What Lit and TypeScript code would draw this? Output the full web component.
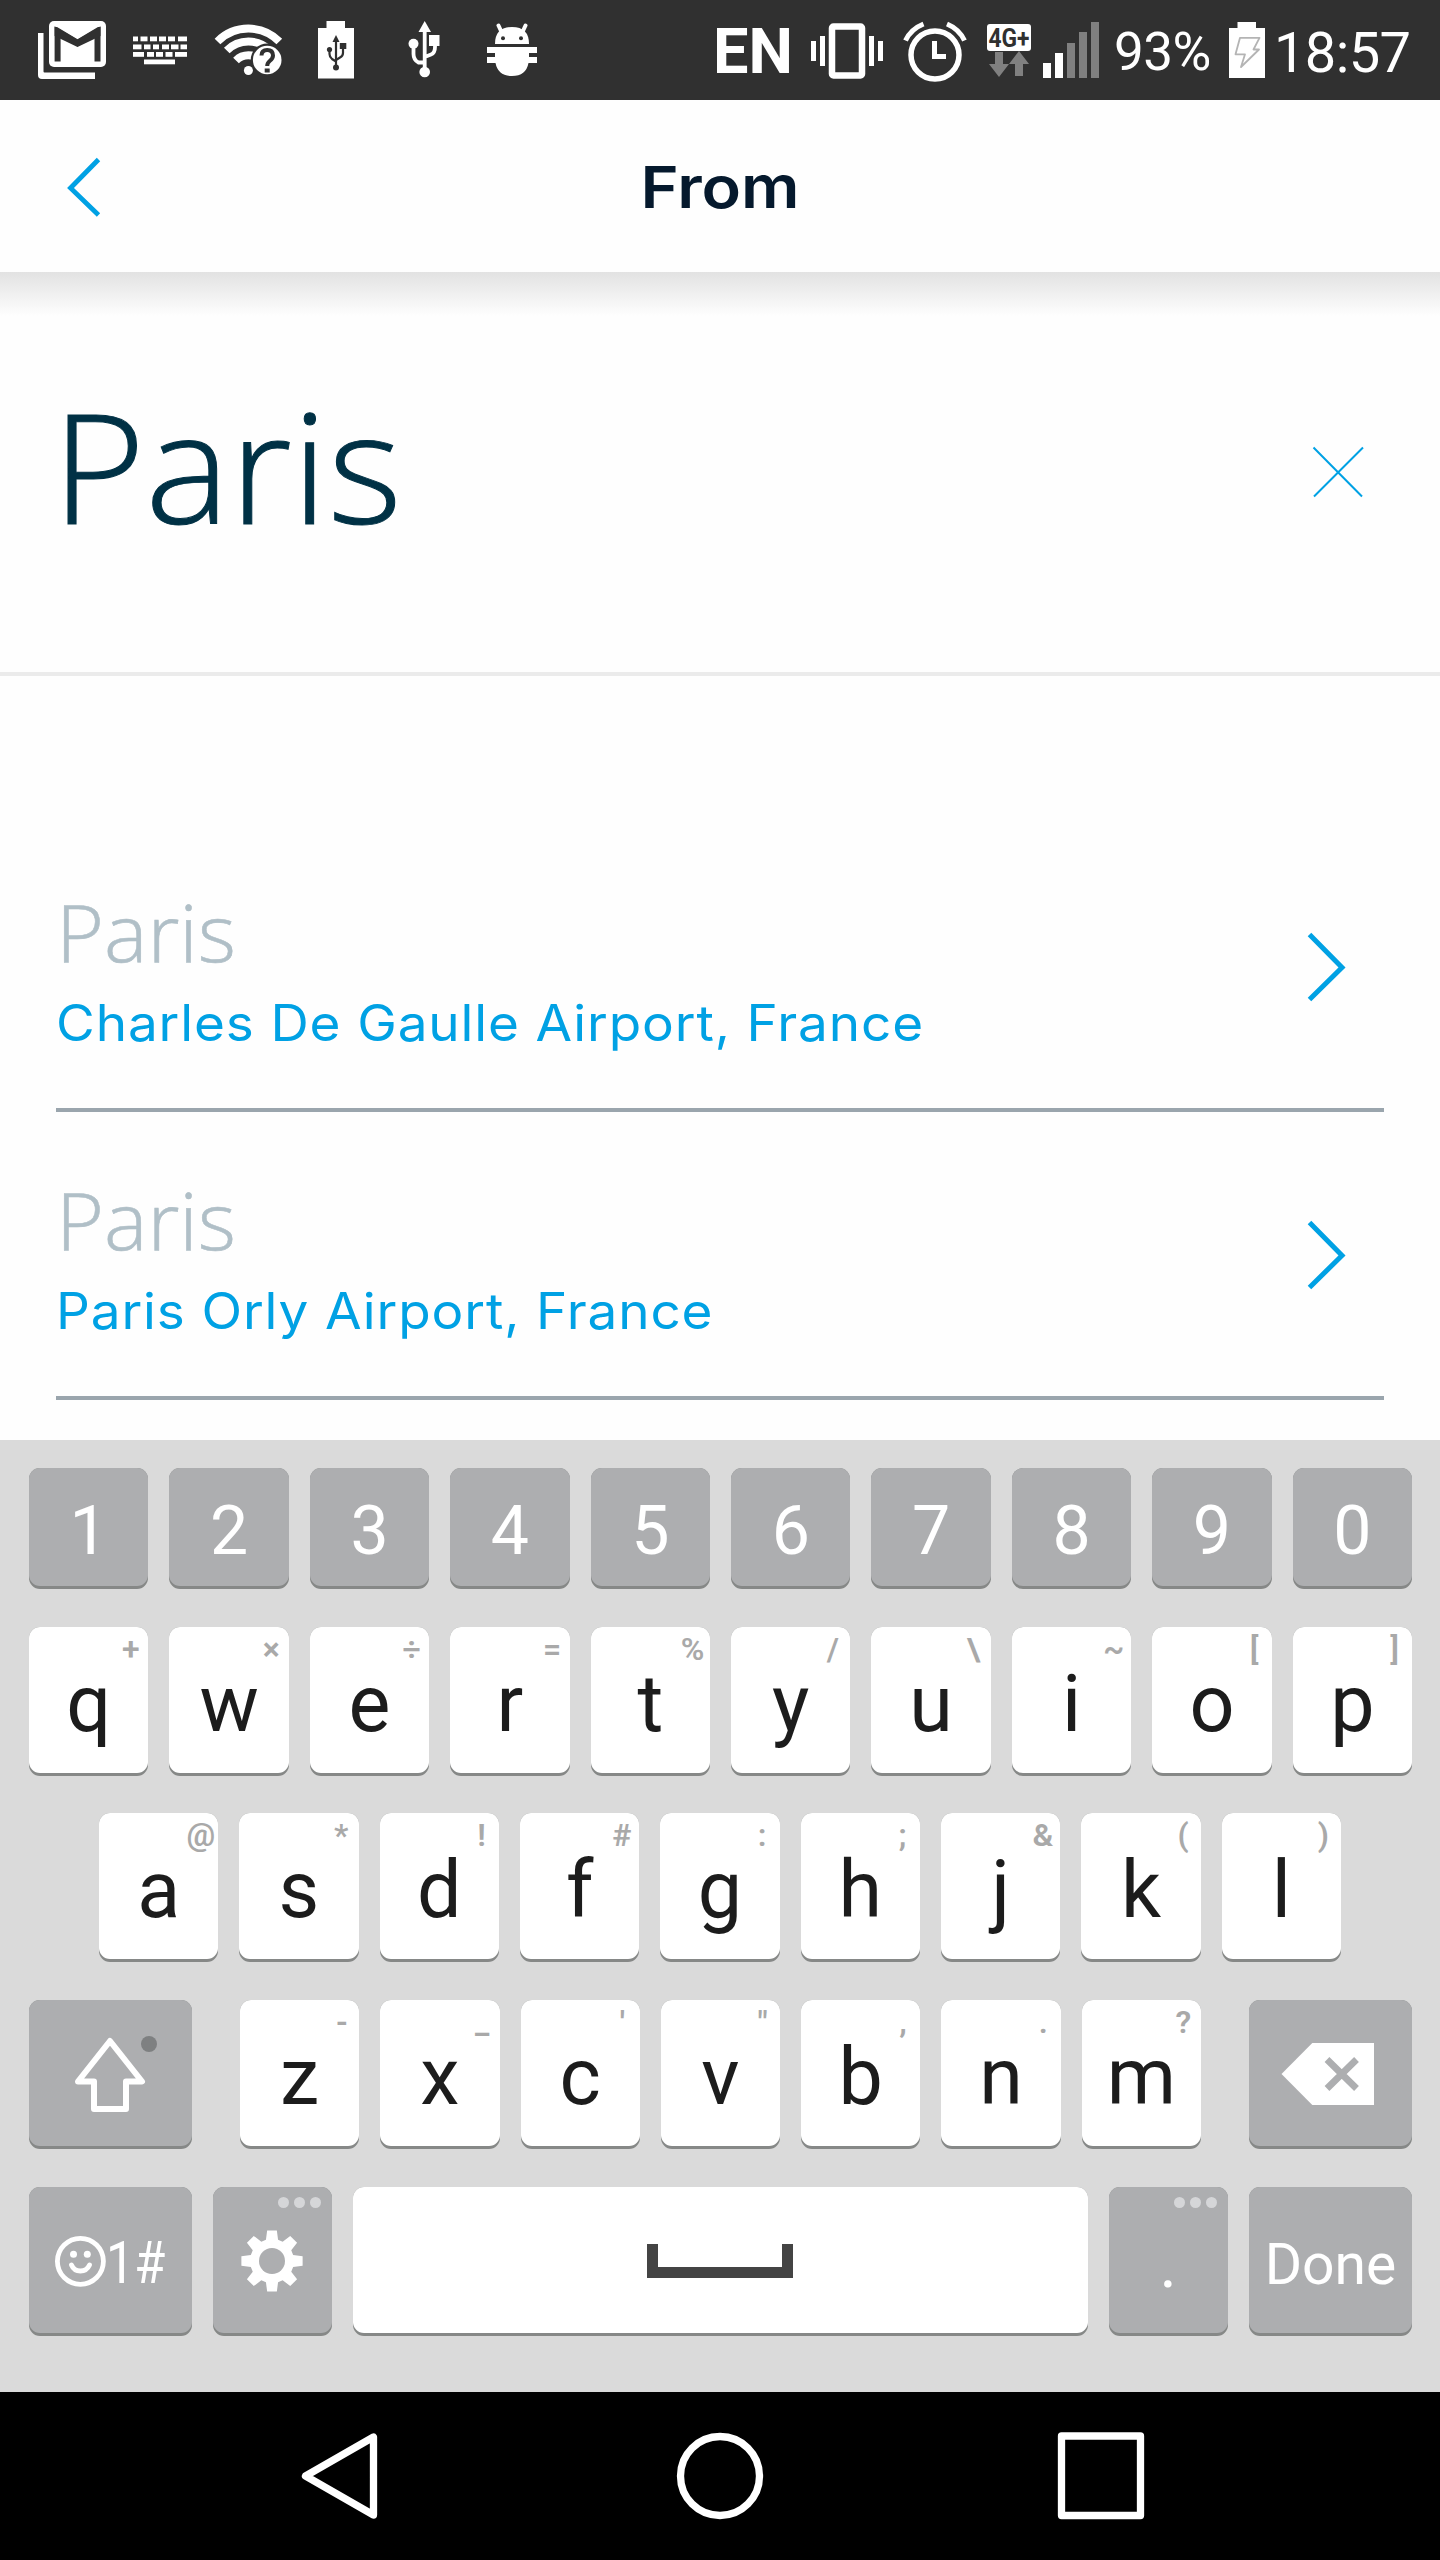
import { LitElement, html, css, svg, nothing } from "lit";
import { customElement } from "lit/decorators.js";

interface KeyDef {
  label: string;
  hint?: string;
}

const NUMBERS: KeyDef[] = [..."1234567890"].map((label) => ({ label }));
const pair = (letters: string, hints: string): KeyDef[] =>
  [...letters].map((label, i) => ({ label, hint: [...hints][i] }));
const ROW_TOP = pair("qwertyuiop", "+×÷=%/\\~[]");
const ROW_HOME = pair("asdfghjkl", "@*!#:;&()");
const ROW_BOTTOM = pair("zxcvbnm", "-_'\",.?");

const AIRPORTS = [
  { city: "Paris", airport: "Charles De Gaulle Airport, France" },
  { city: "Paris", airport: "Paris Orly Airport, France" },
];

/* Status icons share the bar's coordinate space; each svg shows its own slice. */
const slice = (x: number, w: number, body: unknown) => html`
  <svg width=${w} height="100" viewBox="${x} 0 ${w} 100" fill="#fff">${body}</svg>
`;

const keyboardBlocks = [
  [36.5, [[133, 5], [140.5, 7], [150, 7], [159, 7], [168, 7], [178, 9]]],
  [44.5, [[133, 8.5], [144, 6.5], [153, 6], [162, 7], [171, 7.5], [180.5, 6.5]]],
  [52, [[133, 11], [147, 7], [156, 7], [165.5, 7], [175, 12]]],
  [59.5, [[144, 31]]],
] as [number, number[][]][];

const gearPath = (() => {
  const pts: string[] = [];
  const at = (r: number, deg: number) => {
    const a = (deg * Math.PI) / 180;
    return `${(59 + r * Math.sin(a)).toFixed(2)},${(74 - r * Math.cos(a)).toFixed(2)}`;
  };
  for (let i = 0; i < 8; i++) {
    const c = i * 45;
    pts.push(at(22, c - 16), at(31, c - 9), at(31, c + 9), at(22, c + 16));
  }
  return pts.join(" ");
})();

@customElement("status-bar")
export class StatusBar extends LitElement {
  static styles = css`
    :host {
      display: flex;
      height: 100px;
      background: #303030;
      color: #fff;
      font-family: Roboto, sans-serif;
    }
    svg { display: block; flex: none; }
    .grow { flex: 1; }
    .lang { width: 87px; font-size: 63px; font-weight: 700; line-height: 104px; }
    .percent { width: 110px; padding-left: 9px; font-size: 53px; line-height: 104px; letter-spacing: -0.500px; }
    .time { width: 166px; padding-left: 1px; font-size: 56px; line-height: 106px; letter-spacing: -0.600px; white-space: nowrap; }
  `;

  render() {
    return html`
      ${slice(0, 120, svg`
        <path d="M38 33H43.500V71.500Q43.500 72.500 44.500 72.500H95V79H42Q38 79 38 75Z"/>
        <rect x="49" y="21" width="57" height="46" rx="5"/>
        <path d="M57.600 61.500V31.500L77.500 43L97.500 31.500V61.500" fill="none" stroke="#303030" stroke-width="6"/>
        <path d="M54.600 27H57L77.500 39.300L98 27H100.500V36L77.500 47L54.600 36Z" fill="#303030"/>`)}
      ${slice(120, 80, keyboardBlocks.map(([y, row]) =>
        row.map(([x, w]) => svg`<rect x=${x} y=${y} width=${w} height="4.8"/>`)))}
      ${slice(200, 100, svg`
        <g fill="none" stroke="#fff" stroke-width="8">
          <path d="M217.500 41.500A43.500 43.500 0 0 1 279.300 41.500"/>
          <path d="M226.800 50.500A30.500 30.500 0 0 1 270 50.500"/>
          <path d="M236 60.500A17.500 17.500 0 0 1 260.800 60.500"/>
        </g>
        <circle cx="248.400" cy="70.500" r="4.500"/>
        <circle cx="267.200" cy="60" r="16.500" fill="#303030"/>
        <circle cx="267.200" cy="60" r="14.300"/>
        <path d="M261.500 55.500Q261.500 50 267.200 50T273 55.500Q273 58.500 269.700 61Q267.200 63 267.200 66" fill="none" stroke="#303030" stroke-width="4"/>
        <rect x="264.700" y="68.500" width="5" height="4" fill="#303030"/>`)}
      ${slice(300, 70, svg`
        <path d="M318 28H326.500V21H345V28H354V78.500H318Z"/>
        <g fill="#303030">
          <path d="M336 35L339.500 42H332.500Z"/>
          <circle cx="336" cy="67.500" r="3"/>
          <circle cx="329.500" cy="49.500" r="2.600"/>
          <rect x="339.800" y="43" width="6.500" height="6"/>
        </g>
        <path d="M336 40V66M329.500 50V54Q329.500 57 332 59L336 61.500M343 49V53Q343 56 340 57.500L336 60" fill="none" stroke="#303030" stroke-width="2.200"/>`)}
      ${slice(370, 90, svg`
        <path d="M424.700 21L431 32H418.500Z"/>
        <circle cx="424.700" cy="72" r="5.300"/>
        <circle cx="413.500" cy="43.700" r="5"/>
        <rect x="429" y="35" width="10.500" height="11"/>
        <path d="M424.700 30V70M413.500 46V54Q413.500 60 418.500 62.500H424.700M435 45V47Q435 53 431 54.500L424.700 57" fill="none" stroke="#fff" stroke-width="3.800"/>`)}
      ${slice(460, 100, svg`
        <path d="M495 44Q495 27 512 27T529 44Z"/>
        <path d="M498.500 25.500L502 33M525.500 25.500L522 33" stroke="#fff" stroke-width="4" stroke-linecap="round"/>
        <circle cx="503" cy="38.300" r="2" fill="#303030"/>
        <circle cx="521" cy="38.300" r="2" fill="#303030"/>
        <path d="M487 47H537V53H529V57H537V63H528.500Q526 76 512 76T495.500 63H487V57H495V53H487Z"/>`)}
      <span class="grow"></span>
      <span class="lang">EN</span>
      ${slice(800, 95, svg`
        <rect x="832" y="26.500" width="30" height="49" rx="1.500" fill="none" stroke="#fff" stroke-width="6.500"/>
        <path d="M811 41h5v20h-5zM820 36h5v30h-5zM869 36h5v30h-5zM878 41h5v20h-5z"/>`)}
      ${slice(895, 80, svg`
        <circle cx="935" cy="55" r="24" fill="none" stroke="#fff" stroke-width="5.500"/>
        <path d="M905.500 40.500Q911 29 923.500 24M964.500 40.500Q959 29 947 24" fill="none" stroke="#fff" stroke-width="5"/>
        <path d="M932 41H937V54H946V59H932Z"/>`)}
      ${slice(975, 63, svg`
        <rect x="987" y="24" width="44" height="27" rx="3"/>
        <text x="988.500" y="46.500" font-size="26" font-weight="700" fill="#303030" textLength="41" lengthAdjust="spacingAndGlyphs">4G+</text>
        <path d="M995 52H1003V64H1009L999 77L989 64H995ZM1015 76H1023V64H1029L1019 51L1009 64H1015Z" fill="#808080"/>`)}
      ${slice(1038, 67, svg`
        <path d="M1043 63h8v15h-8zM1055 53h8v25h-8z"/>
        <path d="M1067 43h8v35h-8zM1079 32h8v46h-8zM1091 22h8v56h-8z" fill="#808080"/>`)}
      <span class="percent">93%</span>
      ${slice(1224, 49, svg`
        <path d="M1229 28H1237.500V22H1256V28H1265V78H1229Z"/>
        <path d="M1240 37.800H1259.500L1253.500 49.500H1259L1241 67L1245 54.300H1235.500Z" fill="none" stroke="#b4b4b4" stroke-width="1.800" stroke-linejoin="round"/>`)}
      <span class="time">18:57</span>
    `;
  }
}

@customElement("soft-key")
export class SoftKey extends LitElement {
  static properties = { hint: {}, more: { type: Boolean } };
  declare hint?: string;
  declare more?: boolean;

  static styles = css`
    :host {
      display: block;
      position: relative;
      box-sizing: border-box;
      flex: 1 1 0;
      min-width: 0;
      height: 149px;
      border-radius: 11px;
      background: #868887;
      color: #1c1c1c;
      font: 79px/155px Roboto, sans-serif;
      text-align: center;
      white-space: nowrap;
    }
    .face {
      position: absolute;
      inset: 0 0 3px;
      border-radius: inherit;
      background: var(--face, #fff);
    }
    .cover {
      position: absolute;
      inset: 0 0 20px;
      border-radius: 11px 11px 0 0;
      background: var(--face, #fff);
    }
    .label { position: relative; }
    .hint {
      position: absolute;
      top: 0;
      right: -2px;
      width: 39px;
      color: #a9a9a9;
      font: 600 32px/44px Roboto, sans-serif;
    }
    .more {
      position: absolute;
      top: 10px;
      right: 11px;
      display: flex;
      gap: 5px;
    }
    .dot { width: 11px; height: 11px; border-radius: 50%; background: #d5d6d8; }
  `;

  render() {
    return html`
      <div class="face"></div>
      <div class="label"><slot></slot></div>
      ${this.hint ? html`<span class="hint">${this.hint}</span>` : nothing}
      ${this.more
        ? html`<div class="more"><i class="dot"></i><i class="dot"></i><i class="dot"></i></div>`
        : nothing}
    `;
  }
}

@customElement("soft-keyboard")
export class SoftKeyboard extends LitElement {
  static styles = css`
    :host {
      display: flex;
      flex-direction: column;
      box-sizing: border-box;
      gap: 38px;
      height: 952px;
      padding: 28px 28px 0 29px;
      background: #dadada;
    }
    .row { display: flex; gap: 21px; }
    .home { padding: 0 71px 0 70px; margin-top: -1px; }
    .gray { --face: #adaeb0; color: #fff; }
    .number { height: 121px; font-size: 68px; line-height: 126px; }
    .wide { flex: 0 0 163px; }
    .letters { display: flex; flex: 1; gap: 21px; margin: 0 27px; }
    .std { flex: 0 0 119.400px; }
    .done { font-size: 57px; line-height: 155px; }
    .period { font-size: 66px; line-height: 156px; }
    .symbols { display: flex; font-size: 60px; line-height: 151px; }
    .narrow { transform: scaleX(0.84); transform-origin: left; }
    svg { display: block; flex: none; }
  `;

  private keys(defs: KeyDef[], cls = "") {
    return defs.map((k) => html`<soft-key class=${cls} .hint=${k.hint}>${k.label}</soft-key>`);
  }

  render() {
    return html`
      <div class="row">${this.keys(NUMBERS, "gray number")}</div>
      <div class="row">${this.keys(ROW_TOP)}</div>
      <div class="row home">${this.keys(ROW_HOME)}</div>
      <div class="row">
        <soft-key class="gray wide">
          <svg width="163" height="146" viewBox="0 0 163 146">
            <path d="M81 41L113 81.500H97V109H65V81.500H49Z" fill="none" stroke="#fff" stroke-width="6" stroke-linejoin="round"/>
            <circle cx="120" cy="44" r="8" fill="#7e8081"/>
          </svg>
        </soft-key>
        <div class="letters">${this.keys(ROW_BOTTOM)}</div>
        <soft-key class="gray wide">
          <svg width="163" height="146" viewBox="0 0 163 146">
            <path d="M32.500 74L63.300 43H125V105H63.300Z" fill="#fff"/>
            <path d="M78 59.500L107.500 88.500M107.500 59.500L78 88.500" stroke="#adaeb0" stroke-width="6.800"/>
          </svg>
        </soft-key>
      </div>
      <div class="row">
        <soft-key class="gray wide">
          <div class="symbols">
            <svg width="77" height="146" viewBox="0 0 77 146">
              <circle cx="51.400" cy="74.300" r="23" fill="none" stroke="#fff" stroke-width="4.800"/>
              <circle cx="44.500" cy="67.300" r="3.500" fill="#fff"/>
              <circle cx="58.300" cy="67.300" r="3.500" fill="#fff"/>
              <path d="M42.500 78Q45 84 51.400 84T60.500 78" fill="none" stroke="#fff" stroke-width="4.800" stroke-linecap="round"/>
            </svg>
            <span class="narrow">1#</span>
          </div>
        </soft-key>
        <soft-key class="gray std" .more=${true}>
          <svg width="119" height="146" viewBox="0 0 119 146">
            <polygon points=${gearPath} fill="#fff"/>
            <circle cx="59" cy="74" r="13" fill="#adaeb0"/>
          </svg>
        </soft-key>
        <soft-key>
          <svg width="734" height="146" viewBox="0 0 734 146">
            <path d="M294 57H305V80H429V57H440V91H294Z" fill="#444"/>
          </svg>
        </soft-key>
        <soft-key class="gray std period" .more=${true}>.</soft-key>
        <soft-key class="gray wide done">Done</soft-key>
      </div>
    `;
  }
}

@customElement("app-root")
export class AppRoot extends LitElement {
  static styles = css`
    :host {
      display: flex;
      flex-direction: column;
      width: 1440px;
      height: 2560px;
      overflow: hidden;
      background: #fefefe;
    }
    svg { display: block; flex: none; }
    .header {
      display: grid;
      grid-template-columns: 200px 1fr 200px;
      height: 172px;
      background: #fefefe;
    }
    .title {
      color: #05192d;
      font: 600 58px/174px Inter, sans-serif;
      text-align: center;
      transform: scaleX(1.12);
    }
    .search {
      display: flex;
      justify-content: space-between;
      box-sizing: border-box;
      height: 404px;
      padding: 0 70px 0 52px;
      border-bottom: 4px solid #ebebeb;
      background: linear-gradient(#e2e2e2, #fefefe 44px);
    }
    .query {
      padding-top: 112px;
      color: #003145;
      font: 300 154px/160px "Open Sans", sans-serif;
      -webkit-text-stroke: 1px #003145;
      transform: scaleX(1.035);
      transform-origin: left;
    }
    .results {
      flex: 1;
      padding: 148px 56px 0;
    }
    .result {
      display: flex;
      justify-content: space-between;
      box-sizing: border-box;
      height: 288px;
      padding-top: 67px;
      border-bottom: 4px solid #9aa5ad;
    }
    .city {
      color: #b0bfc7;
      font: 300 80px/80px "Open Sans", sans-serif;
      -webkit-text-stroke: 0.600px #b0bfc7;
      transform: scaleX(1.025);
      transform-origin: left;
    }
    .airport {
      margin-top: 22px;
      color: #00a1e4;
      font: 400 50px/60px Inter, sans-serif;
      letter-spacing: 0.800px;
      white-space: nowrap;
      transform: scaleX(1.062);
      transform-origin: left;
    }
    .chevron { margin: 39px 37px 0 0; }
    .nav { display: flex; justify-content: center; height: 168px; background: #000; }
  `;

  render() {
    return html`
      <status-bar></status-bar>
      <div class="header">
        <svg width="200" height="172" viewBox="0 100 200 172">
          <path d="M98.500 159.500L70.500 188L98.500 215" fill="none" stroke="#00a1e4" stroke-width="4.800"/>
        </svg>
        <div class="title">From</div>
      </div>
      <div class="search">
        <div class="query">Paris</div>
        <svg width="70" height="400" viewBox="1300 272 70 400">
          <path d="M1313.500 447.500L1362 496.500M1363 447.500L1314 496.500" stroke="#00a1e4" stroke-width="2"/>
        </svg>
      </div>
      <div class="results">
        ${AIRPORTS.map((a) => html`
          <div class="result">
            <div>
              <div class="city">${a.city}</div>
              <div class="airport">${a.airport}</div>
            </div>
            <svg class="chevron" width="40" height="72" viewBox="0 0 40 72">
              <path d="M2.500 4.500L35 37.500L2.500 69.500" fill="none" stroke="#00a1e4" stroke-width="5"/>
            </svg>
          </div>`)}
      </div>
      <soft-keyboard></soft-keyboard>
      <div class="nav">
        <svg width="1440" height="168" viewBox="0 2392 1440 168" fill="none" stroke="#fff" stroke-width="7.300" stroke-linejoin="round">
          <path d="M305.500 2476L373.500 2437V2515Z"/>
          <circle cx="720" cy="2476" r="39.500"/>
          <rect x="1061.500" y="2436" width="79" height="79.500"/>
        </svg>
      </div>
    `;
  }
}
